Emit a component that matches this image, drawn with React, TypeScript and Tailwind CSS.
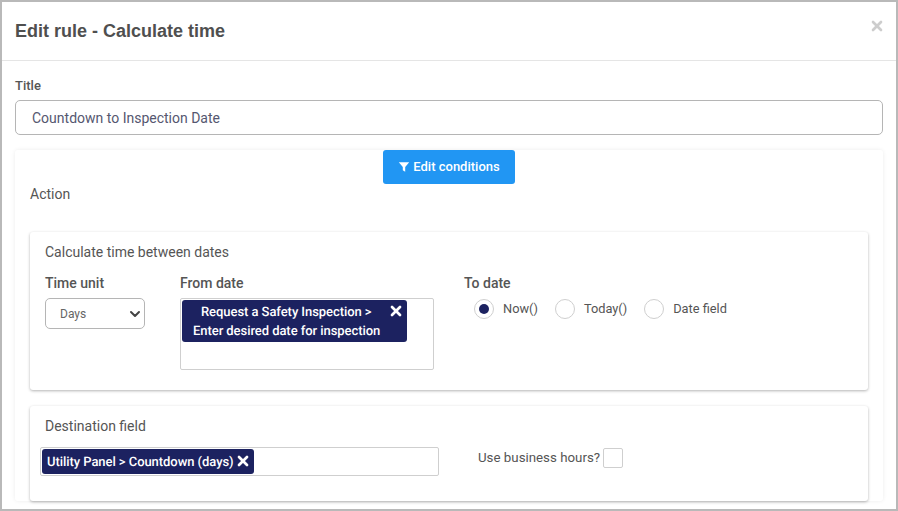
import { ChevronDown, X } from "lucide-react";

const Chip = ({ children, className }: { children: React.ReactNode; className: string }) => (
  <div className={`bg-[#1c2260] text-white rounded-[3px] font-medium ${className}`}>{children}</div>
);

const Radio = ({ label, checked }: { label: string; checked?: boolean }) => (
  <div className="flex items-center gap-[9px]">
    <span className="w-5 h-5 rounded-full border border-[#cfcfcf] flex items-center justify-center">
      {checked && <span className="w-[10px] h-[10px] rounded-full bg-[#1c2260]" />}
    </span>
    <span className="text-[12.8px] text-[#555]">{label}</span>
  </div>
);

const App = () => {
  return (
    <div className="w-[898px] h-[511px] overflow-hidden bg-white border-2 border-[#b9b9b9] text-[#4f4f4f] font-['Roboto',sans-serif]">
      <div className="h-[59px] flex items-center justify-between border-b border-[#e5e5e5] pl-[13px] pr-[13px]">
        <h3 className="text-[18px] font-bold text-[#4f4f4f] font-['Liberation_Sans',sans-serif]">Edit rule - Calculate time</h3>
        <X size={16} strokeWidth={4} className="text-[#cdcdcd] -mt-[10px] -mr-[2px]" />
      </div>
      <div className="px-[13px]">
        <div className="mt-[17px] h-[16px] leading-[16px] text-[13px] font-medium text-[#555]">Title</div>
        <div className="mt-[6px] h-[35px] border border-[#b5b5b5] rounded-[5px] pl-4 pt-[1px] flex items-center text-[14px] text-[#555770]">
          Countdown to Inspection Date
        </div>
        <div className="mt-[15px] rounded-[3px] px-[15px] shadow-[0_0_4px_rgba(0,0,0,0.08)]">
          <div className="flex justify-center">
            <button className="w-[132px] h-[34px] bg-[#2196f3] text-white rounded-[3px] text-[13px] font-medium flex items-center justify-center gap-[3px]">
              <svg width="12" height="12" viewBox="0 0 12 12" fill="currentColor">
                <path d="M.8 1.2h10.4L7.2 6v4.8L4.8 9.2V6z" />
              </svg>
              Edit conditions
            </button>
          </div>
          <div className="text-[14px] leading-[20px] text-[#555]">Action</div>
          <div className="mt-[28px] h-[158px] rounded-[3px] bg-white px-[15px] pt-[12px] shadow-[0_1px_3px_rgba(0,0,0,0.3)]">
            <div className="text-[14px] leading-[16px] text-[#555]">Calculate time between dates</div>
            <div className="mt-[15px] flex">
              <div className="w-[135px]">
                <div className="text-[14px] leading-[16px] font-medium text-[#555]">Time unit</div>
                <div className="mt-[7px] w-[100px] h-[31px] border border-[#b5b5b5] rounded-[5px] flex items-center justify-between pl-[14px] pr-[1px] text-[12px] text-[#666]">
                  Days
                  <ChevronDown size={16} strokeWidth={3} className="text-[#444]" />
                </div>
              </div>
              <div className="w-[284px]">
                <div className="text-[14px] leading-[16px] font-medium text-[#555]">From date</div>
                <div className="mt-[7px] w-[254px] h-[72px] border border-[#cfcfcf] rounded-[2px] pl-[1px] pt-[1px]">
                  <Chip className="relative w-[225px] h-[42px] text-[13px] [text-rendering:geometricPrecision] tracking-[-0.06px] leading-[19px] pt-[3px] pl-[11px]">
                    <div className="pl-[8px]">Request a Safety Inspection &gt;</div>
                    <div>Enter desired date for inspection</div>
                    <X size={16} strokeWidth={4} className="absolute right-[3px] top-[3px]" />
                  </Chip>
                </div>
              </div>
              <div>
                <div className="text-[14px] leading-[16px] font-medium text-[#555]">To date</div>
                <div className="mt-[8px] pl-[10px] flex gap-[17px]">
                  <Radio label="Now()" checked />
                  <Radio label="Today()" />
                  <Radio label="Date field" />
                </div>
              </div>
            </div>
          </div>
          <div className="mt-[16px] h-[95px] rounded-[3px] bg-white px-[15px] pt-[12px] shadow-[0_1px_3px_rgba(0,0,0,0.3)]">
            <div className="text-[14px] leading-[16px] text-[#555]">Destination field</div>
            <div className="mt-[13px] flex items-center">
              <div className="-ml-[5px] w-[399px] h-[29px] border border-[#cfcfcf] rounded-[2px] pl-[1px] pt-[1px]">
                <Chip className="w-[212px] h-[25px] pl-[5px] pt-[3px] flex items-center gap-[1px] text-[13px] [text-rendering:geometricPrecision] tracking-[-0.06px]">
                  Utility Panel &gt; Countdown (days)
                  <X size={16} strokeWidth={4} className="-mt-[5px]" />
                </Chip>
              </div>
              <div className="ml-[39px] mb-[8px] flex items-center gap-[3px] text-[13.3px] text-[#555]">
                Use business hours?
                <span className="w-5 h-5 border border-[#cfcfcf] rounded-[2px]" />
              </div>
            </div>
          </div>
        </div>
      </div>
    </div>
  );
};

export default App;
